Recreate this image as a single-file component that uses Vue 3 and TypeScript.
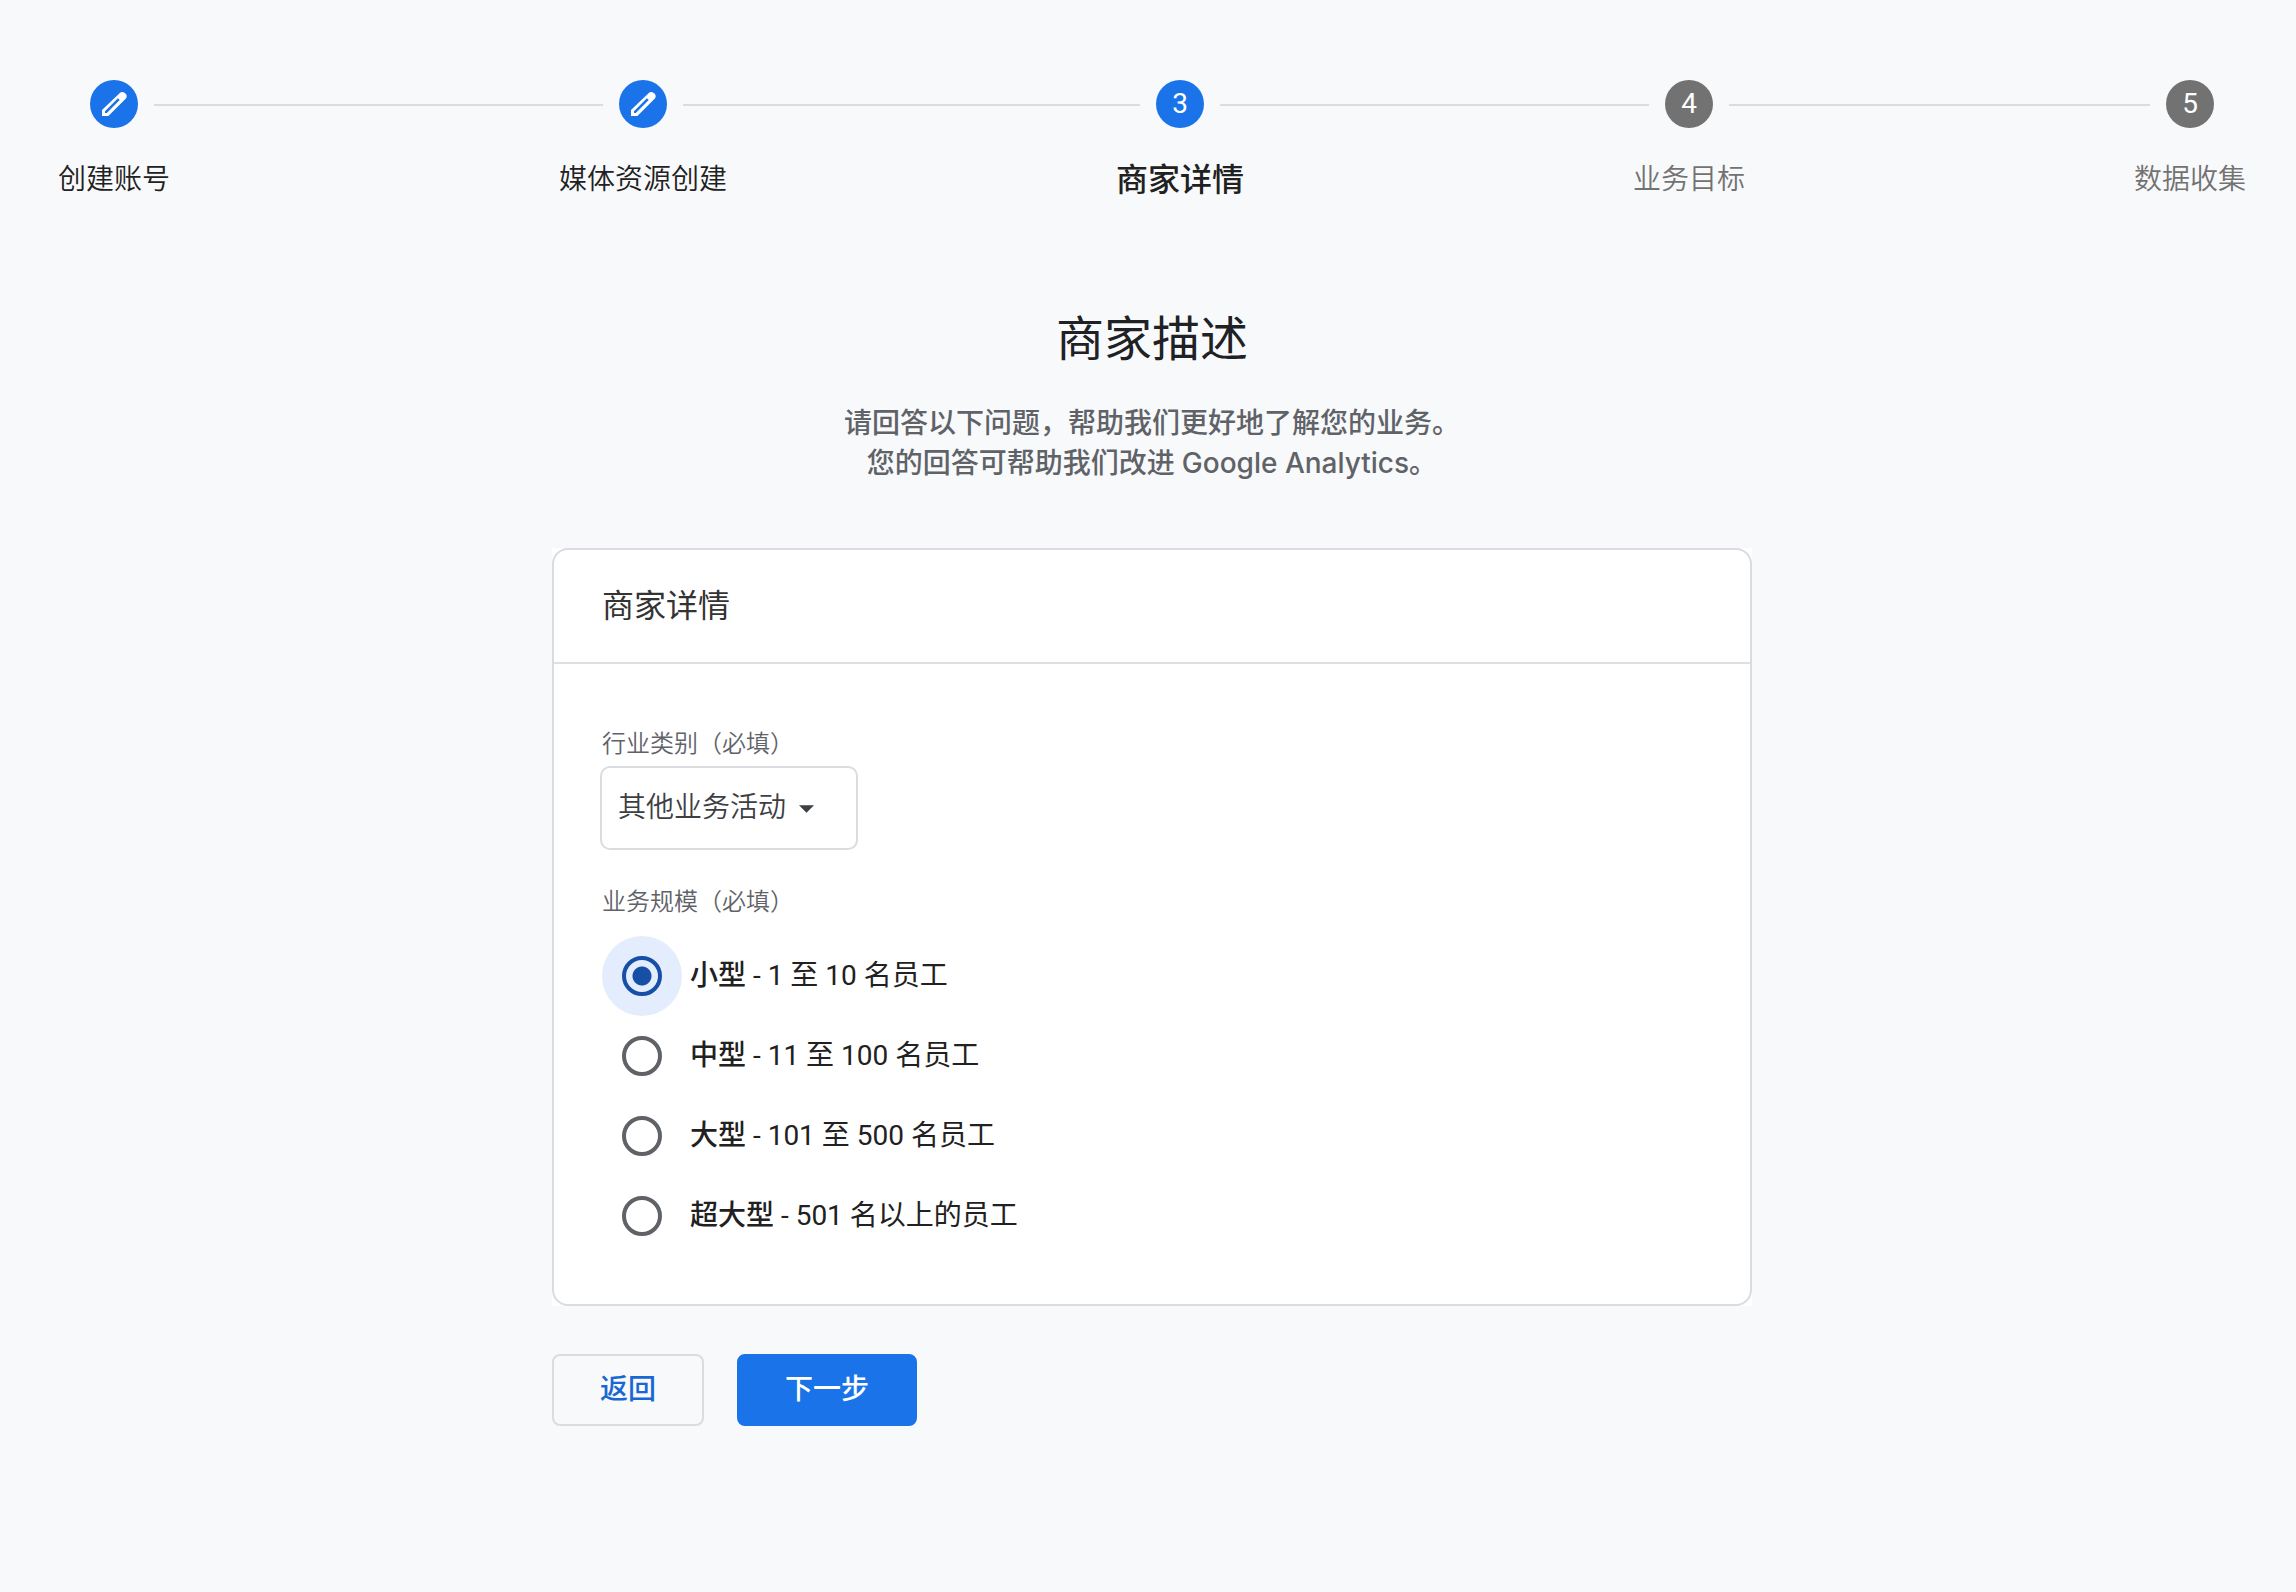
<script setup lang="ts">
import { ref } from 'vue'

interface Step {
  label: string
  state: 'done' | 'active' | 'pending'
}

interface SizeOption {
  value: string
  name: string
  detail: string
}

const steps: Step[] = [
  { label: '创建账号', state: 'done' },
  { label: '媒体资源创建', state: 'done' },
  { label: '商家详情', state: 'active' },
  { label: '业务目标', state: 'pending' },
  { label: '数据收集', state: 'pending' },
]

const sizes: SizeOption[] = [
  { value: 'small', name: '小型', detail: ' - 1 至 10 名员工' },
  { value: 'medium', name: '中型', detail: ' - 11 至 100 名员工' },
  { value: 'large', name: '大型', detail: ' - 101 至 500 名员工' },
  { value: 'xlarge', name: '超大型', detail: ' - 501 名以上的员工' },
]

const industry = ref('other')
const size = ref('small')
</script>

<template>
  <main class="page">
    <ol class="stepper">
      <template v-for="(step, i) in steps" :key="step.label">
        <li v-if="i > 0" class="connector" role="presentation"></li>
        <li class="step" :class="step.state" :aria-current="step.state === 'active' ? 'step' : undefined">
          <div class="marker">
            <span class="line" :class="{ hidden: i === 0 }"></span>
            <span class="circle">
              <svg v-if="step.state === 'done'" class="pencil" viewBox="0 0 32 32" aria-hidden="true">
                <path
                  fill-rule="evenodd"
                  d="M4 28V22L21.800 4.900Q24.200 2.900 26.900 5Q30 7.600 27.900 10.400L10.400 28ZM7 25H8.800L21.700 12.100L19.900 10.300L7 23.200Z"
                />
              </svg>
              <template v-else>{{ i + 1 }}</template>
            </span>
            <span class="line" :class="{ hidden: i === steps.length - 1 }"></span>
          </div>
          <span class="step-label">{{ step.label }}</span>
        </li>
      </template>
    </ol>

    <form class="content" @submit.prevent>
      <h1 class="title">商家描述</h1>
      <p class="intro">
        请回答以下问题，帮助我们更好地了解您的业务。<br />您的回答可帮助我们改进 <span class="brand">Google Analytics</span>。
      </p>

      <div class="card-wrap">
        <section class="card">
          <h2 class="card-title">商家详情</h2>
          <div class="card-body">
            <label class="field-label" for="industry">行业类别（必填）</label>
            <div class="select-box">
              <select id="industry" v-model="industry">
                <option value="other">其他业务活动</option>
              </select>
              <svg class="arrow" viewBox="0 0 16 8" aria-hidden="true"><path d="M0 0H16L8 8Z" /></svg>
            </div>
            <fieldset class="sizes">
              <legend class="field-label">业务规模（必填）</legend>
              <label v-for="option in sizes" :key="option.value" class="option">
                <span class="radio">
                  <input v-model="size" type="radio" name="size" :value="option.value" />
                </span>
                <span class="option-text"><strong>{{ option.name }}</strong>{{ option.detail }}</span>
              </label>
            </fieldset>
          </div>
        </section>
      </div>

      <div class="actions">
        <button type="button" class="button back">返回</button>
        <button type="submit" class="button next">下一步</button>
      </div>
    </form>
  </main>
</template>

<style>
body {
  background: #f8f9fb;
}
</style>

<style scoped>
.page {
  box-sizing: border-box;
  min-height: 100vh;
  padding: 80px 49px 64px 57px;
  background: #f8f9fb;
  color: #212121;
  font-family: Roboto, 'Noto Sans CJK SC', sans-serif;
  font-size: 28px;
  font-weight: 350;
  line-height: 40px;
}

.stepper {
  display: flex;
  margin: 0;
  padding: 0;
  list-style: none;
}

.connector {
  flex: 1;
  height: 24px;
  margin-top: 24px;
  box-sizing: border-box;
  border-top: 2px solid #dadce0;
}

.step {
  display: flex;
  flex-direction: column;
}

.marker {
  display: flex;
  align-items: center;
}

.line {
  flex: 1;
  align-self: flex-end;
  box-sizing: border-box;
  height: 24px;
  border-top: 2px solid #dadce0;
}

.line.hidden {
  visibility: hidden;
}

.circle {
  display: flex;
  align-items: center;
  justify-content: center;
  width: 48px;
  height: 48px;
  margin: 0 16px;
  border-radius: 50%;
  background: #1a73e8;
  color: #fff;
  font-weight: 400;
}

.pending .circle {
  background: #727272;
}

.pencil {
  width: 32px;
  height: 32px;
  fill: #fff;
}

.step-label {
  margin-top: 32px;
  padding: 0 1px;
  text-align: center;
  white-space: nowrap;
}

.active .step-label {
  font-size: 32px;
  font-weight: 500;
}

.pending .step-label {
  color: #727272;
}

.content {
  max-width: 1200px;
  margin: 108px auto 0;
}

.title {
  margin: 0;
  color: #202124;
  font-size: 48px;
  font-weight: 400;
  line-height: 64px;
  text-align: center;
}

.intro {
  margin: 32px 0 0;
  color: #5f6368;
  font-weight: 500;
  text-align: center;
}

.brand {
  font-family: Inter, Roboto, sans-serif;
  line-height: 1;
}

.card-wrap {
  margin-top: 64px;
  background: #fff;
}

.card {
  border: 2px solid #dadce0;
  border-radius: 16px;
}

.card-title {
  margin: 0;
  padding: 36px 48px;
  border-bottom: 2px solid #e0e0e0;
  color: #333;
  font-size: 32px;
  font-weight: 400;
}

.card-body {
  padding: 64px 48px 48px;
}

.field-label {
  display: block;
  padding: 0;
  color: #5f6368;
  font-size: 24px;
  line-height: 32px;
}

.select-box {
  display: flex;
  position: relative;
  width: 258px;
  height: 84px;
  margin-top: 6px;
  margin-left: -2px;
}

select {
  flex: 1;
  box-sizing: border-box;
  padding: 0 16px;
  border: 2px solid #dadce0;
  border-radius: 10px;
  background: #fff;
  color: #3c4043;
  font: inherit;
  appearance: none;
}

.arrow {
  position: absolute;
  top: 39px;
  right: 44px;
  width: 15px;
  height: 8px;
  fill: #3c4043;
  pointer-events: none;
}

.sizes {
  margin: 36px 0 0;
  padding: 0;
  border: 0;
}

.sizes .field-label {
  margin-bottom: 18px;
}

.option {
  display: flex;
  align-items: center;
  gap: 8px;
}

.radio {
  display: flex;
  align-items: center;
  justify-content: center;
  width: 80px;
  height: 80px;
  border-radius: 50%;
}

.radio:has(:checked) {
  background: #e4edfd;
}

.radio input {
  box-sizing: border-box;
  width: 40px;
  height: 40px;
  margin: 0;
  border: 4px solid #5f6368;
  border-radius: 50%;
  appearance: none;
}

.radio input:checked {
  border-color: #174ea6;
  background: radial-gradient(circle, #174ea6 9px, transparent 10px);
}

.option-text {
  font-weight: 400;
  white-space: pre-wrap;
}

.option-text strong {
  font-weight: 500;
}

.actions {
  display: flex;
  gap: 33px;
  margin-top: 48px;
}

.button {
  box-sizing: border-box;
  height: 72px;
  padding: 0 46px;
  border: 2px solid #dadce0;
  border-radius: 8px;
  background: transparent;
  color: #1967d2;
  font: inherit;
  font-weight: 500;
}

.next {
  border-color: #1a73e8;
  background: #1a73e8;
  color: #fff;
}
</style>
